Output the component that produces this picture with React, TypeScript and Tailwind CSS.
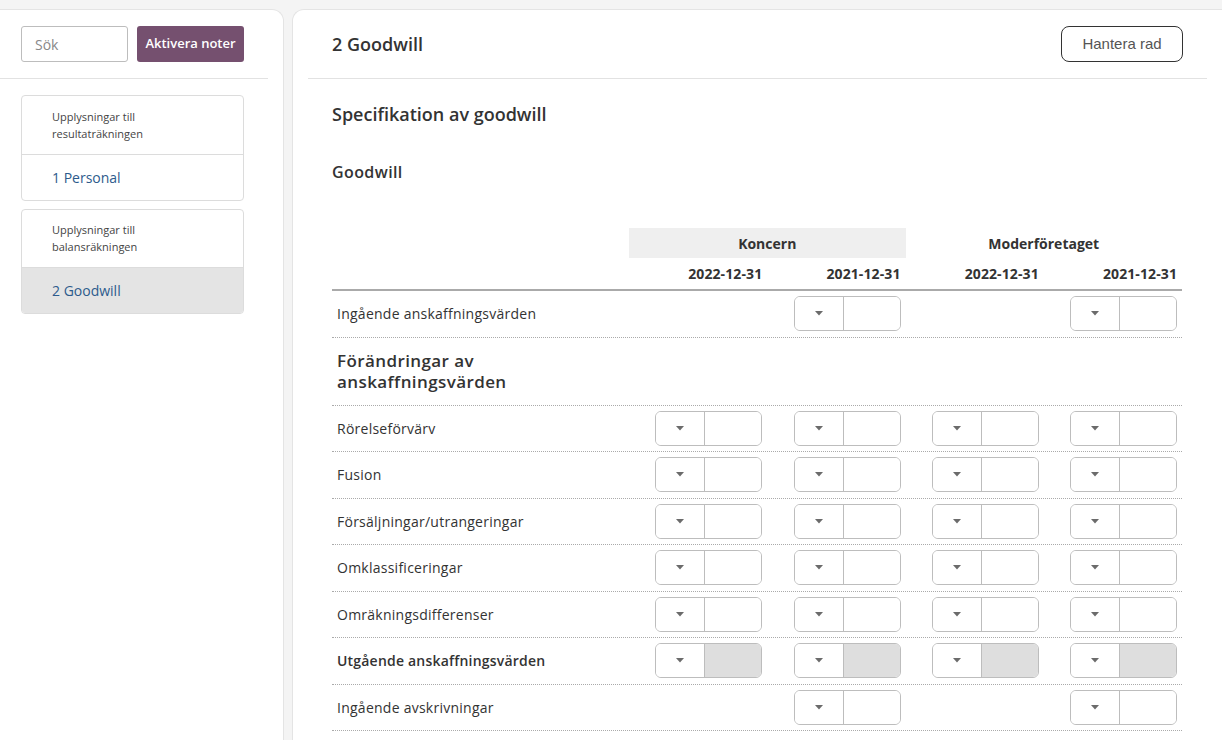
import React from "react";

type Row =
  | { kind: "heading"; label: string }
  | { kind: "row"; label: string; cols: boolean[]; bold?: boolean; filled?: boolean };

const rows: Row[] = [
  { kind: "row", label: "Ingående anskaffningsvärden", cols: [false, true, false, true] },
  { kind: "heading", label: "Förändringar av anskaffningsvärden" },
  { kind: "row", label: "Rörelseförvärv", cols: [true, true, true, true] },
  { kind: "row", label: "Fusion", cols: [true, true, true, true] },
  { kind: "row", label: "Försäljningar/utrangeringar", cols: [true, true, true, true] },
  { kind: "row", label: "Omklassificeringar", cols: [true, true, true, true] },
  { kind: "row", label: "Omräkningsdifferenser", cols: [true, true, true, true] },
  { kind: "row", label: "Utgående anskaffningsvärden", cols: [true, true, true, true], bold: true, filled: true },
  { kind: "row", label: "Ingående avskrivningar", cols: [false, true, false, true] },
];

function Caret() {
  return (
    <svg width="8" height="5" viewBox="0 0 8 5">
      <path d="M0 0 L8 0 L4 4.5 Z" fill="#6b6b6b" />
    </svg>
  );
}

function ValueInput({ filled }: { filled?: boolean }) {
  return (
    <div className="flex h-[35px] w-[107px] rounded-[6px] border border-[#bdbdbd] overflow-hidden">
      <div className="flex w-[49px] items-center justify-center border-r border-[#bdbdbd] bg-white">
        <Caret />
      </div>
      <div className={filled ? "flex-1 bg-[#dedede]" : "flex-1 bg-white"} />
    </div>
  );
}

export default function App() {
  return (
    <div
      className="min-h-screen bg-[#f4f4f4] pt-[9px] flex gap-[8px] text-[#333]"
      style={{ fontFamily: '"Open Sans", "Noto Sans", sans-serif' }}
    >
      {/* ================= SIDEBAR ================= */}
      <aside className="w-[284px] shrink-0 bg-white rounded-tr-xl border border-l-0 border-b-0 border-[#e4e4e4] min-h-[731px]">
        <div className="flex gap-[9px] px-[21px] pt-[16px]">
          <input
            placeholder="Sök"
            className="h-[36px] w-[107px] rounded-[3px] border border-[#bdbdbd] px-[13px] text-[14px] placeholder:text-[#888] outline-none"
          />
          <button className="h-[36px] w-[107px] rounded-[3px] bg-[#75506f] text-[13px] font-semibold text-white">
            Aktivera noter
          </button>
        </div>

        <div className="mt-[16px] mr-[15px] border-b border-[#e2e2e2]" />

        <div className="px-[21px] pt-[16px] flex flex-col gap-[8px] w-[265px]">
          <div className="rounded-[4px] border border-[#dcdcdc] overflow-hidden">
            <div className="h-[59px] border-b border-[#dcdcdc] px-[30px] pt-[12px] text-[11px] leading-[17px] text-[#444]">
              Upplysningar till
              <br />
              resultaträkningen
            </div>
            <div className="flex h-[45px] items-center px-[30px] pb-[1px] text-[14px] text-[#2d5b8c]">1 Personal</div>
          </div>

          <div className="rounded-[4px] border border-[#dcdcdc] overflow-hidden">
            <div className="h-[58px] border-b border-[#dcdcdc] px-[30px] pt-[11px] text-[11px] leading-[17px] text-[#444]">
              Upplysningar till
              <br />
              balansräkningen
            </div>
            <div className="flex h-[45px] items-center bg-[#e4e4e4] px-[30px] pb-[1px] text-[14px] text-[#2d5b8c]">
              2 Goodwill
            </div>
          </div>
        </div>
      </aside>

      {/* ================= MAIN ================= */}
      <main className="flex-1 bg-white rounded-tl-xl border border-r-0 border-b-0 border-[#e4e4e4]">
        <div className="mx-[15px] flex h-[69px] items-center justify-between border-b border-[#e2e2e2] px-[24px]">
          <h1 className="text-[18px] font-semibold text-[#333]">2 Goodwill</h1>
          <button
            className="h-[36px] w-[122px] rounded-[8px] border border-[#333] text-[15px] text-[#555]"
            style={{ fontFamily: '"Liberation Sans", Arial, sans-serif' }}
          >
            Hantera rad
          </button>
        </div>

        <div className="px-[39px]">
          <h2 className="mt-[23px] text-[18px] font-semibold leading-[24px]">Specifikation av goodwill</h2>
          <h3 className="mt-[35px] text-[16px] font-semibold leading-[22px] tracking-[0.4px]">Goodwill</h3>

          {/* TABELL */}
          <div className="mt-[45px] w-[850px]">
            <div className="grid grid-cols-[297px_repeat(4,1fr)] h-[30px] items-stretch text-[14px] font-bold">
              <div />
              <div className="col-span-2 flex items-center justify-center bg-[#efefef]">Koncern</div>
              <div className="col-span-2 flex items-center justify-center">Moderföretaget</div>
            </div>
            <div className="grid grid-cols-[297px_repeat(4,1fr)] h-[33px] items-center border-b-2 border-[#aaa] text-[14px] font-bold tracking-[0.1px]">
              <div />
              <div className="pr-[5px] text-right">2022-12-31</div>
              <div className="pr-[5px] text-right">2021-12-31</div>
              <div className="pr-[5px] text-right">2022-12-31</div>
              <div className="pr-[5px] text-right">2021-12-31</div>
            </div>

            {rows.map((r) =>
              r.kind === "heading" ? (
                <div
                  key={r.label}
                  className="grid grid-cols-[297px_repeat(4,1fr)] h-[68px] items-center border-b border-dotted border-[#aaa]"
                >
                  <div className="px-[5px] text-[17px] font-semibold leading-[21px] tracking-[0.4px]">{r.label}</div>
                </div>
              ) : (
                <div
                  key={r.label}
                  className="grid grid-cols-[297px_repeat(4,1fr)] h-[46.5px] items-center border-b border-dotted border-[#aaa]"
                >
                  <div
                    className={
                      r.bold
                        ? "px-[5px] text-[14px] font-semibold tracking-[0.2px]"
                        : "px-[5px] text-[14px] tracking-[0.25px]"
                    }
                  >
                    {r.label}
                  </div>
                  {r.cols.map((c, i) => (
                    <div key={i} className="flex justify-end pr-[5px]">
                      {c && <ValueInput filled={r.filled} />}
                    </div>
                  ))}
                </div>
              )
            )}
          </div>
        </div>
      </main>
    </div>
  );
}
